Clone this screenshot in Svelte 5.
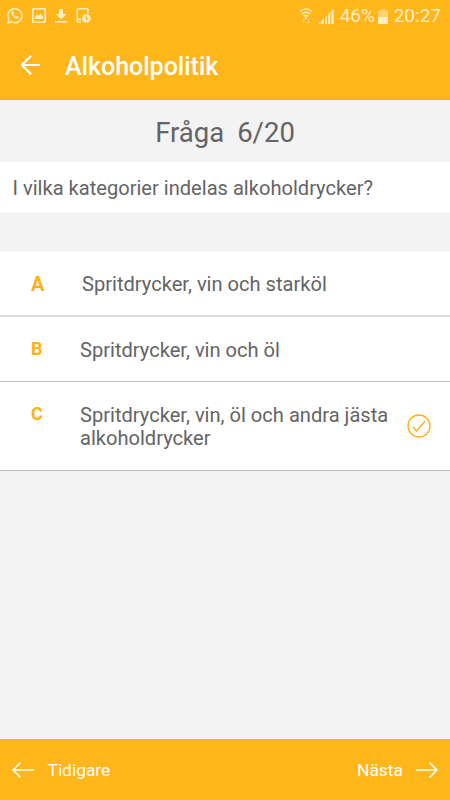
<script lang="ts">
  type Answer = { letter: string; text: string }

  const title = 'Alkoholpolitik'
  const current = 6
  const total = 20
  const question = 'I vilka kategorier indelas alkoholdrycker?'
  const answers: Answer[] = [
    { letter: 'A', text: 'Spritdrycker, vin och starköl' },
    { letter: 'B', text: 'Spritdrycker, vin och öl' },
    { letter: 'C', text: 'Spritdrycker, vin, öl och andra jästa alkoholdrycker' },
  ]

  let selected = $state('C')
</script>

<div class="screen">
  <div class="status">
    <div class="notifications">
      <svg width="16" height="17" viewBox="0 0 16 17" fill="none" stroke="currentColor" stroke-width="1.5">
        <path d="M.9 15.9l1-3.7A7 7 0 1 1 4.7 14.9z" />
        <path d="M5.2 4.3c-1.1.8-.9 2.4.2 4.1 1.2 1.8 2.8 3.1 4.4 3.2 1.1 0 1.9-.7 2-1.7L9.9 8.9l-1 1C7.7 9.3 6.8 8.4 6.3 7.3l.8-1-.8-2z" fill="currentColor" stroke="none" />
      </svg>
      <svg width="14" height="15" viewBox="0 0 14 15" fill="none" stroke="currentColor" stroke-width="1.6">
        <rect x=".8" y=".8" width="12.4" height="13.4" rx=".8" />
        <path d="M3 11V8.5l2-2L6.500 8l2-2.500L11 8.500V11z" fill="currentColor" stroke="none" />
      </svg>
      <svg width="12" height="14" viewBox="0 0 12 14" fill="currentColor">
        <path d="M4 0h4v5h3.5L6 10.500.5 5H4zM0 12h12v1.6H0z" />
      </svg>
      <svg width="15" height="15" viewBox="0 0 15 15">
        <path d="M12 6V1.600A.8.8 0 0 0 11.200.8H2a.8.8 0 0 0-.8.8v11.600a.8.8 0 0 0 .8.8h3.500M1 11.300h4" fill="none" stroke="currentColor" stroke-width="1.5" />
        <circle cx="10.3" cy="10.5" r="4.3" fill="currentColor" />
        <path d="M10.2 8v2.800h2.300" fill="none" stroke="#ffb61a" stroke-width="1.2" />
      </svg>
    </div>
    <div class="system">
      <svg class="wifi" width="14" height="16" viewBox="0 0 14 16" fill="none" stroke="currentColor" stroke-width="1.5">
        <path d="M1 3.500q6-4.800 12 0M2.900 6q4.100-3.400 8.200 0M4.800 8.400q2.200-1.800 4.400 0" />
        <circle cx="7" cy="10" r="1" fill="currentColor" stroke="none" />
        <path d="M4.500 15v-4M3 12.500l1.500-1.600L6 12.500M9.500 11v4M8 13.500l1.500 1.600 1.500-1.600" stroke-width="1" opacity=".6" />
      </svg>
      <svg class="signal" width="16" height="15" viewBox="0 0 16 15" fill="currentColor">
        <path d="M0 15l2.600-2.500V15zM3.600 11.500l2.300-2.200V15H3.600zM7 8.400l2.100-2V15H7zM10.200 5.200L12.300 3v12h-2.100zM13.400 2l2.300-2v15h-2.300z" />
      </svg>
      <span class="percent">46%</span>
      <svg class="battery" width="10" height="15" viewBox="0 0 10 15" fill="currentColor">
        <path d="M3 0h4v1.500h3V8H0V1.500h3z" opacity=".5" />
        <path d="M0 8h10v7H0z" />
      </svg>
      <span class="clock">20:27</span>
    </div>
  </div>

  <header>
    <button aria-label="Tillbaka">
      <svg width="20" height="20" viewBox="0 0 20 20" fill="none" stroke="currentColor" stroke-width="2.2">
        <path d="M20 10H1.800M11 .9L1.800 10l9.200 9.100" />
      </svg>
    </button>
    <h1>{title}</h1>
  </header>

  <main>
    <div class="counter"><span>Fråga</span><span>{current}/{total}</span></div>
    <p class="question">{question}</p>

    <ul>
      {#each answers as answer, index}
        <li class:first={index === 0}>
          <button onclick={() => (selected = answer.letter)}>
            <span class="letter">{answer.letter}</span>
            <span class="text">{answer.text}</span>
            {#if selected === answer.letter}
              <svg class="check" width="24" height="24" viewBox="0 0 24 24" fill="none" stroke="currentColor" stroke-width="1.3">
                <circle cx="12" cy="12" r="11" />
                <path d="M5.800 12.800l3.700 4.100L18 7.200" />
              </svg>
            {/if}
          </button>
        </li>
      {/each}
    </ul>
  </main>

  <footer>
    <button>
      <svg width="22" height="16" viewBox="0 0 22 16" fill="none" stroke="currentColor" stroke-width="1.5">
        <path d="M22 8H1M8.500.6L1 8l7.500 7.400" />
      </svg>
      <span class="previous">Tidigare</span>
    </button>
    <button>
      <span class="next">Nästa</span>
      <svg width="22" height="16" viewBox="0 0 22 16" fill="none" stroke="currentColor" stroke-width="1.5">
        <path d="M0 8h21M13.500.6L21 8l-7.500 7.400" />
      </svg>
    </button>
  </footer>
</div>

<style>
  :global(body) {
    margin: 0;
  }

  .screen {
    --accent: #ffb61a;
    --text: #646464;
    display: flex;
    flex-direction: column;
    height: 100vh;
    background: #f3f3f3;
    color: var(--text);
    font-family: Roboto, 'Liberation Sans', sans-serif;
  }

  svg {
    display: block;
    flex: none;
  }

  button {
    display: flex;
    align-items: center;
    padding: 0;
    border: 0;
    background: none;
    color: inherit;
    font: inherit;
    text-align: left;
  }

  .status {
    display: flex;
    justify-content: space-between;
    align-items: center;
    box-sizing: border-box;
    height: 32px;
    padding: 0 9px 0 7px;
    background: var(--accent);
    color: #ffedc4;
  }

  .notifications,
  .system {
    display: flex;
    align-items: center;
  }

  .notifications {
    gap: 9px;
    margin-top: -1px;
  }

  .wifi {
    margin-right: 5px;
  }

  .signal {
    margin-right: 6px;
  }

  .percent,
  .clock {
    font-size: 19px;
    line-height: 32px;
  }

  .percent {
    width: 35px;
  }

  .battery {
    margin: 0 6px 0 3px;
  }

  header {
    display: flex;
    align-items: center;
    box-sizing: border-box;
    height: 68px;
    padding: 0 20px 2px;
    background: var(--accent);
    color: #fff;
  }

  h1 {
    margin: 2px 0 0 25px;
    font-size: 25px;
    font-weight: 500;
  }

  main {
    flex: 1;
  }

  .counter {
    display: flex;
    justify-content: center;
    gap: 13px;
    height: 62px;
    font-size: 27.5px;
    line-height: 65px;
  }

  .question {
    height: 51px;
    margin: 0 0 38px;
    padding-left: 12.5px;
    background: #fff;
    font-size: 20.1px;
    line-height: 53px;
  }

  ul {
    margin: 0;
    padding: 0;
    list-style: none;
  }

  li {
    border-bottom: 1px solid #bdbdbd;
    background: #fff;
  }

  li button {
    align-items: flex-start;
    width: 100%;
    box-sizing: border-box;
    min-height: 64px;
    padding: 22px 0 19px 31px;
  }

  li:last-child button {
    padding-bottom: 20px;
  }

  .letter {
    width: 49px;
    color: #ffb010;
    font-size: 18px;
    font-weight: 700;
    line-height: 19px;
  }

  .text {
    width: 317px;
    font-size: 20.1px;
    line-height: 23px;
  }

  .first {
    border-bottom: 2px solid #dcdcdc;
  }

  .first .letter {
    width: 51px;
    font-size: 20px;
    line-height: 23px;
  }

  .check {
    margin: 10px 0 0 10px;
    color: #ffb010;
  }

  footer {
    display: flex;
    justify-content: space-between;
    height: 61px;
    padding: 0 12px;
    background: var(--accent);
    color: #fff;
    font-size: 17.4px;
  }

  .previous {
    margin-left: 13.5px;
  }

  .next {
    margin-right: 13px;
  }
</style>
